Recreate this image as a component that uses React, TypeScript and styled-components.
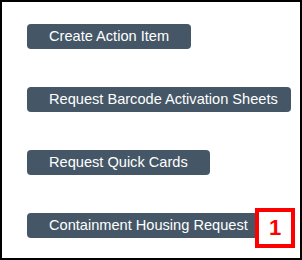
import styled, { createGlobalStyle } from "styled-components"

const GlobalStyle = createGlobalStyle`
	html, body {
		margin: 0;
		padding: 0;
		background: #ffffff;
	}
	body {
		font-family: "Liberation Sans", Arial, sans-serif;
	}
`

const Frame = styled.div`
	box-sizing: border-box;
	width: 302px;
	height: 260px;
	border: 2px solid #000000;
	background: #ffffff;
	padding: 22px 0 0 25px;
	display: flex;
	flex-direction: column;
	align-items: flex-start;
	gap: 38px;
`

const Row = styled.div`
	position: relative;
	display: flex;
`

const ActionButton = styled.div<{ $maxWidth?: number }>`
	box-sizing: border-box;
	height: 25px;
	line-height: 25px;
	padding: 0 22px;
	max-width: ${p => (p.$maxWidth ? `${p.$maxWidth}px` : "none")};
	background: #455767;
	color: #ffffff;
	border-radius: 4px;
	font-size: 14.6px;
	white-space: nowrap;
	cursor: pointer;
`

const Callout = styled.div`
	position: absolute;
	left: 228px;
	top: -5px;
	box-sizing: border-box;
	width: 40px;
	height: 40px;
	border: 4px solid #ff0000;
	background: #ffffff;
	color: #ff0000;
	font-size: 22px;
	font-weight: bold;
	display: flex;
	align-items: center;
	justify-content: center;
`

function App() {
	return (
		<>
			<GlobalStyle />
			<Frame>
				<ActionButton>Create Action Item</ActionButton>
				<ActionButton $maxWidth={264}>Request Barcode Activation Sheets</ActionButton>
				<ActionButton>Request Quick Cards</ActionButton>
				<Row>
					<ActionButton>Containment Housing Request</ActionButton>
					<Callout>1</Callout>
				</Row>
			</Frame>
		</>
	)
}

export default App
